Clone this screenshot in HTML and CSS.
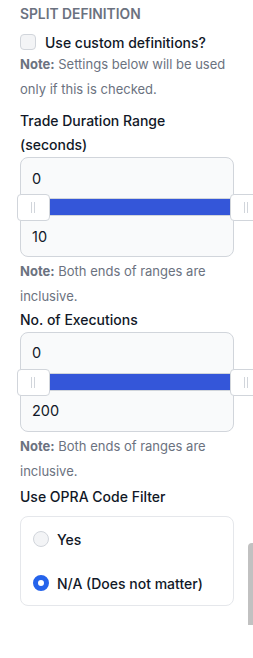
FILE: index.html
```html
<!DOCTYPE html>
<html lang="en">
<head>
    <meta charset="UTF-8">
    <meta name="viewport" content="width=device-width, initial-scale=1.0">
    <title>Split Definition</title>
    <link rel="stylesheet" href="styles.css">
</head>
<body>
    <div class="panel">
        <h2 class="section-title">SPLIT DEFINITION</h2>

        <label class="check-row">
            <input type="checkbox" class="checkbox">
            <span>Use custom definitions?</span>
        </label>
        <p class="note"><b>Note:</b> Settings below will be used only if this is checked.</p>

        <div class="field-label duration-label">Trade Duration Range (seconds)</div>
        <div class="range-box">
            <input type="text" class="range-input" value="0">
            <div class="slider">
                <div class="track"><div class="fill"></div></div>
                <span class="handle handle-min"></span>
                <span class="handle handle-max"></span>
            </div>
            <input type="text" class="range-input" value="10">
        </div>
        <p class="note range-note"><b>Note:</b> Both ends of ranges are inclusive.</p>

        <div class="field-label exec-label">No. of Executions</div>
        <div class="range-box">
            <input type="text" class="range-input" value="0">
            <div class="slider">
                <div class="track"><div class="fill"></div></div>
                <span class="handle handle-min"></span>
                <span class="handle handle-max"></span>
            </div>
            <input type="text" class="range-input" value="200">
        </div>
        <p class="note range-note"><b>Note:</b> Both ends of ranges are inclusive.</p>

        <div class="field-label opra-label">Use OPRA Code Filter</div>
        <div class="radio-box">
            <label class="radio-row">
                <input type="radio" name="opra" class="radio">
                <span>Yes</span>
            </label>
            <label class="radio-row">
                <input type="radio" name="opra" class="radio" checked>
                <span>N/A (Does not matter)</span>
            </label>
        </div>
    </div>
    <div class="scroll-thumb"></div>
</body>
</html>
```

FILE: styles.css
```css
* {
    margin: 0;
    padding: 0;
    box-sizing: border-box;
}

body {
    font-family: Inter, 'Noto Sans', sans-serif;
    background: white;
    color: #111827;
    width: 253px;
    height: 658px;
    overflow: hidden;
    position: relative;
}

.panel {
    padding: 6px 19px 0 20px;
}

.section-title {
    font-size: 13.8px;
    font-weight: 600;
    line-height: 16px;
    color: #6b7280;
}

.check-row {
    display: flex;
    align-items: center;
    gap: 9px;
    height: 22px;
    margin-top: 9px;
    font-size: 14px;
    font-weight: 500;
}

.checkbox {
    appearance: none;
    width: 16px;
    height: 16px;
    border: 1px solid #d1d5db;
    border-radius: 4px;
    background: #f3f4f6;
}

.note {
    font-size: 13px;
    line-height: 25px;
    color: #6b7280;
    margin-top: -1px;
}

.note b {
    font-weight: 700;
}

.range-note {
    margin-top: 2px;
}

.field-label {
    font-size: 14px;
    font-weight: 500;
    line-height: 24px;
}

.duration-label {
    margin-top: 7px;
}

.exec-label {
    margin-top: -1.5px;
}

.opra-label {
    margin-top: 1.5px;
}

.range-box {
    border: 1px solid #d1d5db;
    border-radius: 8px;
    background: #f9fafb;
}

.range-input {
    display: block;
    width: 100%;
    height: 40px;
    border: none;
    background: transparent;
    padding: 0 11px;
    font-family: inherit;
    font-size: 14.5px;
    color: #111827;
    outline: none;
}

.slider {
    position: relative;
    height: 18px;
}

.track {
    height: 18px;
    margin: 0 -1px;
    border-top: 1px solid #d1d5db;
    border-bottom: 1px solid #d1d5db;
    background: #d1d5db;
}

.fill {
    height: 16px;
    margin-left: 30px;
    background: #3456d9;
}

.handle {
    position: absolute;
    top: -4px;
    width: 33px;
    height: 27px;
    background: white;
    border: 1px solid #d1d5db;
    border-radius: 4px;
}

.handle::before,
.handle::after {
    content: '';
    position: absolute;
    top: 7px;
    width: 1px;
    height: 11px;
    background: #d1d5db;
}

.handle::before { left: 13px; }
.handle::after { left: 16px; }

.handle-min { left: -4px; }
.handle-max { left: 209px; }

.radio-box {
    margin-top: 7px;
    border: 1px solid #e5e7eb;
    border-radius: 8px;
}

.radio-row {
    display: flex;
    align-items: center;
    gap: 8px;
    height: 44px;
    padding-left: 12px;
    font-size: 14px;
    font-weight: 500;
}

.radio {
    appearance: none;
    width: 16px;
    height: 16px;
    border-radius: 50%;
    border: 1px solid #d1d5db;
    background: #f3f4f6;
}

.radio:checked {
    border: 5px solid #2563eb;
    background: white;
}

.scroll-thumb {
    position: absolute;
    left: 248px;
    top: 543px;
    width: 8px;
    height: 82px;
    border-radius: 4px 0 0 0;
    background: #c1c1c1;
}
```
